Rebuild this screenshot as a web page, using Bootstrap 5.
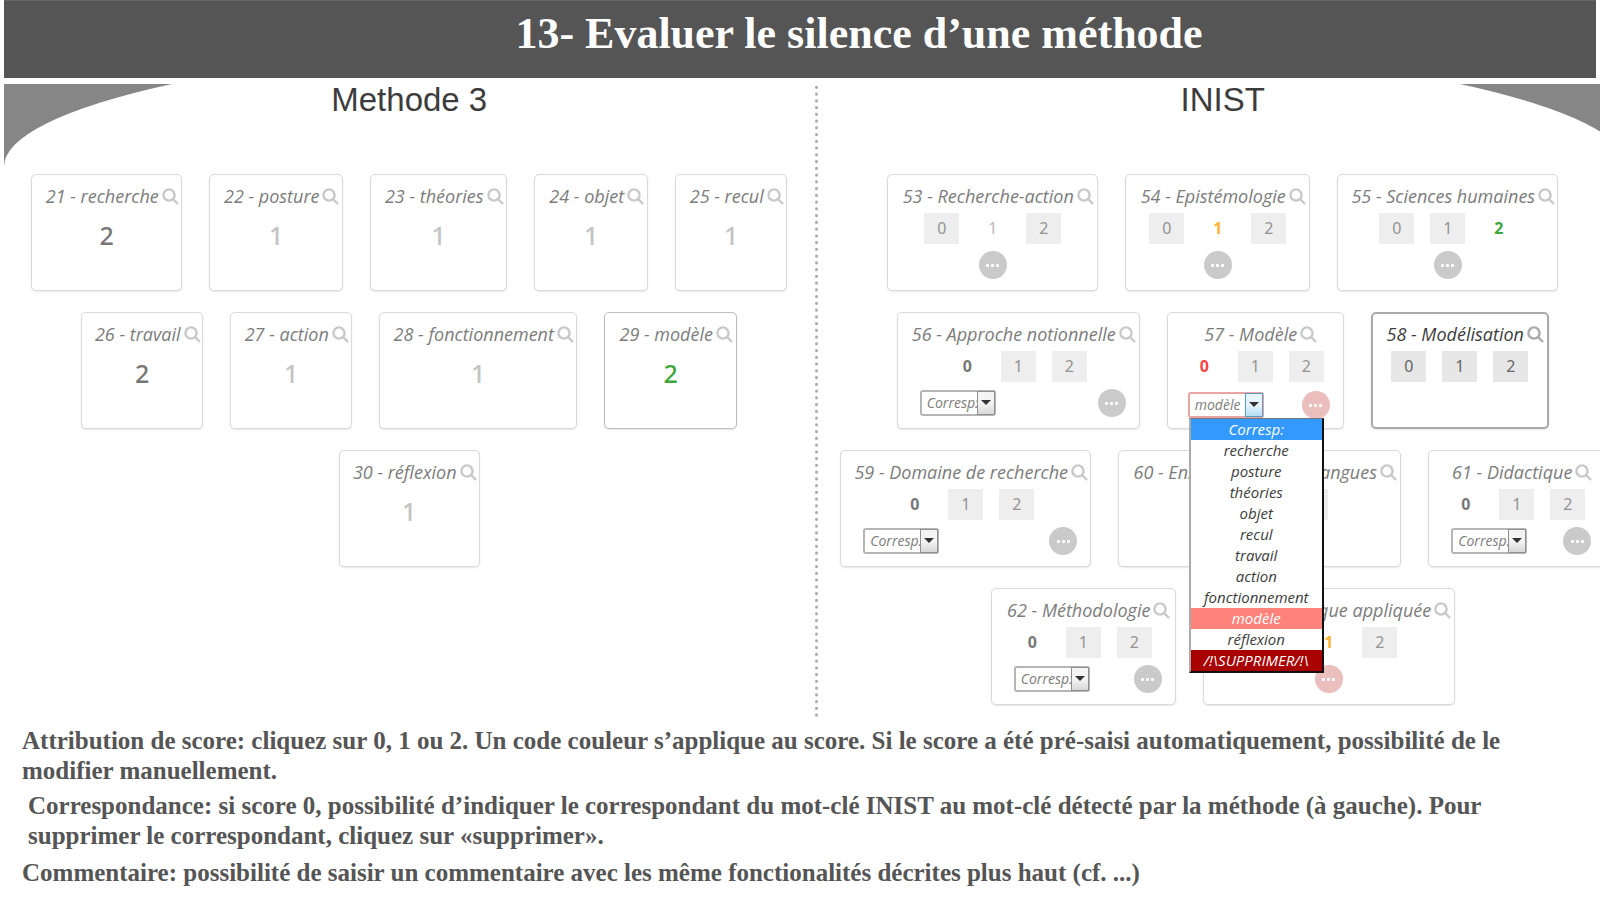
<!DOCTYPE html>
<html lang="fr">
<head>
<meta charset="utf-8">
<meta name="viewport" content="width=device-width, initial-scale=1">
<title>13- Evaluer le silence d’une méthode</title>
<link rel="stylesheet" href="https://cdn.jsdelivr.net/npm/bootstrap@5.3.0/dist/css/bootstrap.min.css">
<style>
body{background:#fff;font-family:"Noto Sans","Open Sans",sans-serif;overflow-x:hidden}
.topbar{background:#555;height:78px;margin:0 4px 6px;padding-left:118px;border-top:1px solid #666}
.topbar h1{font:bold 44px/66px "Liberation Serif",serif;color:#fff}
.stage-clip{margin-left:4px;overflow:hidden}
/* the stage runs past the right edge of the window */
.stage{width:calc(100% + 28px);height:633px;display:grid;grid-template-columns:1fr 3px 1fr}
.corner{position:absolute;top:0;width:168px;height:83px;fill:#868686}
.corner-l{left:0}
.corner-r{right:0;transform:scaleX(-1)}
.dots{background:radial-gradient(circle,#aaa 0 1px,transparent 2px) 0 0/100% calc(100%/95)}
.side h2{font:33px/32px "Liberation Sans",sans-serif;color:#3c3c3c;margin:0 0 58px}
.line{gap:27px;margin-bottom:21px;flex-wrap:nowrap}
.kw{height:117px;flex:none;border:1px solid #dadada;border-radius:5px;box-shadow:0 1px 2px #e6e6e6;background:#fff;padding-top:8px;color:#7c7c7c}
.kw.linked{border-color:#bdbdbd}
.kw.active{border:2px solid #aaa;padding-top:7px;color:#3c3c3c}
.kw-title{font-size:18px;line-height:26px;font-style:italic;font-family:"Open Sans",sans-serif;font-weight:400;margin:0;padding-left:11px;white-space:nowrap;gap:3px}
.kw-title svg{width:17px;height:17px;flex:none;fill:none;stroke:#c9c9c9;stroke-width:2.4}
.kw.active .kw-title svg{stroke:#aaa}
.total{font-size:25px;line-height:30px;font-weight:500;color:#c3c3c3;margin-top:11px;text-align:center}
.total.two{color:#777}
.total.match{color:#3da63d}
.scores{gap:16px;margin-top:4px}
.scores button{width:35px;height:31px;border:0;padding:0;background:#eee;color:#949494;font-size:16px;line-height:31px}
.kw.active .scores button{background:#e7e7e7;color:#666}
.scores button.on{background:none;font-weight:700;color:#777}
.scores button.plain{background:none;color:#bbb}
.scores button.mid{color:#fdb32f}
.scores button.good{color:#3da63d}
.scores button.bad{color:#fb4343}
.foot{margin-top:7px;padding:0 13px 0 22px}
.more{width:28px;height:28px;border:0;border-radius:50%;padding:0;background:#cacaca;display:flex;align-items:center;justify-content:center;gap:2px}
.more i{width:3px;height:3px;background:#fff;border-radius:1px}
.more.red{background:#eabfbd}
.pick{position:relative;width:76px;height:26px}
.pick select{appearance:none;width:76px;height:26px;border:2px solid #b5b5b5;border-radius:3px;background:#fff;color:#7c7c7c;font:italic 14px/22px "Open Sans",sans-serif;padding:0 16px 0 5px;overflow:hidden}
.pick span{position:absolute;right:1px;top:1px;width:18px;height:24px;border:1px solid #909090;background:linear-gradient(#f4f4f4 50%,#d8d8d8);pointer-events:none}
.pick span::after{content:"";position:absolute;left:3px;top:8px;border:5px solid transparent;border-top-color:#333;border-bottom:0}
.pick.open select{border-color:#e9a5a3}
.pick.open span{border-color:#5a9cc4;background:linear-gradient(#e6f5fd 50%,#b5def6)}
.choices{position:absolute;z-index:5;left:1px;top:26px;width:135px;margin:0;padding:0;list-style:none;background:#fff;border:1px solid #777;border-left:2px solid #aaa;border-right:2px solid #111;border-bottom:2px solid #111}
.choices button{display:block;width:100%;border:0;padding:0;background:none;color:#3c3c3c;font:italic 15px/21px "Open Sans",sans-serif;text-align:center}
.choices .hover{background:#3399ff;color:#fff}
.choices .current{background:#ff837b;color:#fff}
.choices .remove{background:#a90000;color:#fff}
#k21{width:151px}#k22{width:134px}#k23{width:137px}#k24{width:114px}#k25{width:112px}
#k26{width:122px}#k27{width:122px}#k28{width:198px}#k29{width:133px}#k30{width:141px}
#k53{width:211px}#k54{width:185px}#k55{width:221px}
#k56{width:243px}#k57{width:177px}#k58{width:178px}
#k59{width:251px}#k60{width:283px}#k61{width:177px}
#k62{width:185px}#k63{width:252px}
#k57 .foot{margin-top:9px;padding-left:20px}
.notes{font:bold 25px/30px "Liberation Serif",serif;color:#555;padding:9px 24px 0 22px}
.notes p{margin:0 0 5px}
.notes p+p{padding-left:6px}
.notes p:last-child{padding:0;margin-top:7px}
</style>
</head>
<body>
<svg width="0" height="0" class="position-absolute"><symbol id="lens" viewBox="0 0 17 17"><circle cx="7" cy="7" r="5.6"/><path d="M11 11l5 5"/></symbol></svg>
<header class="topbar text-center"><h1 class="m-0">13- Evaluer le silence d’une méthode</h1></header>

<main class="stage-clip">
<div class="stage position-relative">
  <svg class="corner corner-l" viewBox="0 0 166 82" preserveAspectRatio="none"><path d="M0 0V82A812 135 0 0 1 166 0Z"/></svg>
  <svg class="corner corner-r" viewBox="0 0 166 82" preserveAspectRatio="none"><path d="M0 0V82A812 135 0 0 1 166 0Z"/></svg>

  <section class="side">
    <h2 class="text-center">Methode 3</h2>
    <div class="line d-flex justify-content-center">
      <article class="kw" id="k21"><h3 class="kw-title d-flex justify-content-center align-items-center">21 - recherche<svg><use href="#lens"/></svg></h3><div class="total two">2</div></article>
      <article class="kw" id="k22"><h3 class="kw-title d-flex justify-content-center align-items-center">22 - posture<svg><use href="#lens"/></svg></h3><div class="total">1</div></article>
      <article class="kw" id="k23"><h3 class="kw-title d-flex justify-content-center align-items-center">23 - théories<svg><use href="#lens"/></svg></h3><div class="total">1</div></article>
      <article class="kw" id="k24"><h3 class="kw-title d-flex justify-content-center align-items-center">24 - objet<svg><use href="#lens"/></svg></h3><div class="total">1</div></article>
      <article class="kw" id="k25"><h3 class="kw-title d-flex justify-content-center align-items-center">25 - recul<svg><use href="#lens"/></svg></h3><div class="total">1</div></article>
    </div>
    <div class="line d-flex justify-content-center">
      <article class="kw" id="k26"><h3 class="kw-title d-flex justify-content-center align-items-center">26 - travail<svg><use href="#lens"/></svg></h3><div class="total two">2</div></article>
      <article class="kw" id="k27"><h3 class="kw-title d-flex justify-content-center align-items-center">27 - action<svg><use href="#lens"/></svg></h3><div class="total">1</div></article>
      <article class="kw" id="k28"><h3 class="kw-title d-flex justify-content-center align-items-center">28 - fonctionnement<svg><use href="#lens"/></svg></h3><div class="total">1</div></article>
      <article class="kw linked" id="k29"><h3 class="kw-title d-flex justify-content-center align-items-center">29 - modèle<svg><use href="#lens"/></svg></h3><div class="total match">2</div></article>
    </div>
    <div class="line d-flex justify-content-center">
      <article class="kw" id="k30"><h3 class="kw-title d-flex justify-content-center align-items-center">30 - réflexion<svg><use href="#lens"/></svg></h3><div class="total">1</div></article>
    </div>
  </section>

  <div class="dots"></div>

  <section class="side">
    <h2 class="text-center">INIST</h2>
    <div class="line d-flex justify-content-center">
      <article class="kw" id="k53"><h3 class="kw-title d-flex justify-content-center align-items-center">53 - Recherche-action<svg><use href="#lens"/></svg></h3>
        <div class="scores d-flex justify-content-center"><button>0</button><button class="plain">1</button><button>2</button></div>
        <div class="foot d-flex justify-content-center px-0"><button class="more" aria-label="Commentaire"><i></i><i></i><i></i></button></div></article>
      <article class="kw" id="k54"><h3 class="kw-title d-flex justify-content-center align-items-center">54 - Epistémologie<svg><use href="#lens"/></svg></h3>
        <div class="scores d-flex justify-content-center"><button>0</button><button class="on mid">1</button><button>2</button></div>
        <div class="foot d-flex justify-content-center px-0"><button class="more" aria-label="Commentaire"><i></i><i></i><i></i></button></div></article>
      <article class="kw" id="k55"><h3 class="kw-title d-flex justify-content-center align-items-center">55 - Sciences humaines<svg><use href="#lens"/></svg></h3>
        <div class="scores d-flex justify-content-center"><button>0</button><button>1</button><button class="on good">2</button></div>
        <div class="foot d-flex justify-content-center px-0"><button class="more" aria-label="Commentaire"><i></i><i></i><i></i></button></div></article>
    </div>
    <div class="line d-flex justify-content-center">
      <article class="kw" id="k56"><h3 class="kw-title d-flex justify-content-center align-items-center">56 - Approche notionnelle<svg><use href="#lens"/></svg></h3>
        <div class="scores d-flex justify-content-center"><button class="on">0</button><button>1</button><button>2</button></div>
        <div class="foot d-flex justify-content-between align-items-center"><div class="pick"><select aria-label="Correspondant"><option>Corresp:</option></select><span></span></div><button class="more" aria-label="Commentaire"><i></i><i></i><i></i></button></div></article>
      <article class="kw" id="k57"><h3 class="kw-title d-flex justify-content-center align-items-center">57 - Modèle<svg><use href="#lens"/></svg></h3>
        <div class="scores d-flex justify-content-center"><button class="on bad">0</button><button>1</button><button>2</button></div>
        <div class="foot d-flex justify-content-between align-items-center"><div class="pick open"><select aria-label="Correspondant"><option>modèle</option></select><span></span>
          <ul class="choices">
            <li><button class="hover">Corresp:</button></li>
            <li><button>recherche</button></li>
            <li><button>posture</button></li>
            <li><button>théories</button></li>
            <li><button>objet</button></li>
            <li><button>recul</button></li>
            <li><button>travail</button></li>
            <li><button>action</button></li>
            <li><button>fonctionnement</button></li>
            <li><button class="current">modèle</button></li>
            <li><button>réflexion</button></li>
            <li><button class="remove">/!\SUPPRIMER/!\</button></li>
          </ul></div><button class="more red" aria-label="Commentaire"><i></i><i></i><i></i></button></div></article>
      <article class="kw active" id="k58"><h3 class="kw-title d-flex justify-content-center align-items-center">58 - Modélisation<svg><use href="#lens"/></svg></h3>
        <div class="scores d-flex justify-content-center"><button>0</button><button>1</button><button>2</button></div></article>
    </div>
    <div class="line d-flex justify-content-center">
      <article class="kw" id="k59"><h3 class="kw-title d-flex justify-content-center align-items-center">59 - Domaine de recherche<svg><use href="#lens"/></svg></h3>
        <div class="scores d-flex justify-content-center"><button class="on">0</button><button>1</button><button>2</button></div>
        <div class="foot d-flex justify-content-between align-items-center"><div class="pick"><select aria-label="Correspondant"><option>Corresp:</option></select><span></span></div><button class="more" aria-label="Commentaire"><i></i><i></i><i></i></button></div></article>
      <article class="kw" id="k60"><h3 class="kw-title d-flex justify-content-center align-items-center">60 - Enseignement des langues<svg><use href="#lens"/></svg></h3>
        <div class="scores d-flex justify-content-center"><button>0</button><button>1</button><button>2</button></div></article>
      <article class="kw" id="k61"><h3 class="kw-title d-flex justify-content-center align-items-center">61 - Didactique<svg><use href="#lens"/></svg></h3>
        <div class="scores d-flex justify-content-center"><button class="on">0</button><button>1</button><button>2</button></div>
        <div class="foot d-flex justify-content-between align-items-center"><div class="pick"><select aria-label="Correspondant"><option>Corresp:</option></select><span></span></div><button class="more" aria-label="Commentaire"><i></i><i></i><i></i></button></div></article>
    </div>
    <div class="line d-flex justify-content-center">
      <article class="kw" id="k62"><h3 class="kw-title d-flex justify-content-center align-items-center">62 - Méthodologie<svg><use href="#lens"/></svg></h3>
        <div class="scores d-flex justify-content-center"><button class="on">0</button><button>1</button><button>2</button></div>
        <div class="foot d-flex justify-content-between align-items-center"><div class="pick"><select aria-label="Correspondant"><option>Corresp:</option></select><span></span></div><button class="more" aria-label="Commentaire"><i></i><i></i><i></i></button></div></article>
      <article class="kw" id="k63"><h3 class="kw-title d-flex justify-content-center align-items-center">63 - Linguistique appliquée<svg><use href="#lens"/></svg></h3>
        <div class="scores d-flex justify-content-center"><button>0</button><button class="on mid">1</button><button>2</button></div>
        <div class="foot d-flex justify-content-center px-0"><button class="more red" aria-label="Commentaire"><i></i><i></i><i></i></button></div></article>
    </div>
  </section>
</div>
</main>

<footer class="notes">
  <p>Attribution de score: cliquez sur 0, 1 ou 2. Un code couleur s’applique au score. Si le score a été pré-saisi automatiquement, possibilité de le modifier manuellement.</p>
  <p>Correspondance: si score 0, possibilité d’indiquer le correspondant du mot-clé INIST au mot-clé détecté par la méthode (à gauche). Pour supprimer le correspondant, cliquez sur «supprimer».</p>
  <p>Commentaire: possibilité de saisir un commentaire avec les même fonctionalités décrites plus haut (cf. ...)</p>
</footer>
<script src="https://cdn.jsdelivr.net/npm/bootstrap@5.3.0/dist/js/bootstrap.bundle.min.js"></script>
</body>
</html>
